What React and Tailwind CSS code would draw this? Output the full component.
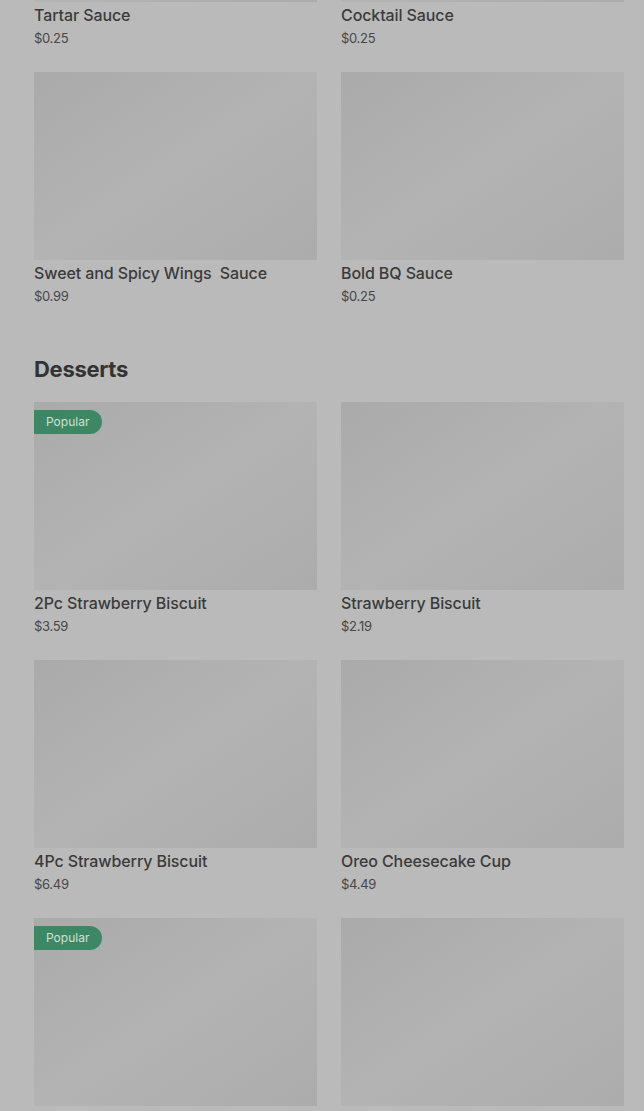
const sauces = [
  { name: "Tartar Sauce", price: "$0.25" },
  { name: "Cocktail Sauce", price: "$0.25" },
  { name: "Sweet and Spicy Wings\u00a0 Sauce", price: "$0.99" },
  { name: "Bold BQ Sauce", price: "$0.25" },
];

const desserts = [
  { name: "2Pc Strawberry Biscuit", price: "$3.59", popular: true },
  { name: "Strawberry Biscuit", price: "$2.19" },
  { name: "4Pc Strawberry Biscuit", price: "$6.49" },
  { name: "Oreo Cheesecake Cup", price: "$4.49" },
  { name: "Chocolate Chip Cookie", price: "$1.29", popular: true },
  { name: "Chocolate Cheesecake Cup", price: "$4.49" },
];

function Item({ item }) {
  return (
    <div className="flex flex-col">
      <div className="relative h-[188px] bg-gradient-to-br from-[#aaaaaa] via-[#b3b3b3] to-[#acacac]">
        {item.popular && (
          <span className="absolute left-0 top-[8px] h-[24px] pl-[12px] pr-[13px] flex items-center rounded-r-full bg-[#3c8864] text-[12px] text-[#cfe0d6]">
            Popular
          </span>
        )}
      </div>
      <p className="mt-[1px] text-[16px] leading-[24px] font-medium text-[#3b3b3b] whitespace-pre tracking-[-0.1px]">
        {item.name}
      </p>
      <p className="mt-[1px] text-[13px] leading-[20px] text-[#474747] tracking-[-0.3px]">{item.price}</p>
    </div>
  );
}

export default function App() {
  return (
    <div
      className="h-[1111px] overflow-hidden bg-[#bababa]"
      style={{ fontFamily: "Inter, 'Noto Sans', sans-serif" }}
    >
      <div className="-mt-[186px] pl-[34px] pr-[20px]">
        <div className="grid grid-cols-2 gap-x-[24px] gap-y-[24px]">
          {sauces.map((s) => (
            <Item key={s.name} item={s} />
          ))}
        </div>

        <h2 className="mt-[51px] mb-[21px] text-[22px] leading-[24px] font-bold text-[#333333] tracking-[-0.3px]">
          Desserts
        </h2>

        <div className="grid grid-cols-2 gap-x-[24px] gap-y-[24px]">
          {desserts.map((d) => (
            <Item key={d.name} item={d} />
          ))}
        </div>
      </div>
    </div>
  );
}
